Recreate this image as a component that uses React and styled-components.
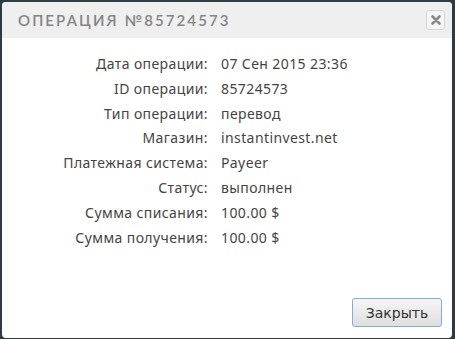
import styled, { createGlobalStyle } from "styled-components";

const GlobalStyle = createGlobalStyle`
	html, body {
		margin: 0;
		padding: 0;
		background: #2d3c43;
	}
	#root {
		height: 339px;
		padding: 2px 3px 1px 2px;
		box-sizing: border-box;
	}
`;

const rows = [
	["Дата операции:", "07 Сен 2015 23:36"],
	["ID операции:", "85724573"],
	["Тип операции:", "перевод"],
	["Магазин:", "instantinvest.net"],
	["Платежная система:", "Payeer"],
	["Статус:", "выполнен"],
	["Сумма списания:", "100.00 $"],
	["Сумма получения:", "100.00 $"],
];

const App = () => {
	return (
		<>
			<GlobalStyle />
			<Dialog>
				<Header>
					<Title>Операция №85724573</Title>
					<CloseButton>
						<svg width="10" height="10" viewBox="0 0 10 10">
							<path
								d="M1.5 1.5 L8.5 8.5 M8.5 1.5 L1.5 8.5"
								stroke="#888"
								strokeWidth="2.6"
								strokeLinecap="round"
							/>
						</svg>
					</CloseButton>
				</Header>
				<Body>
					<Details>
						{rows.map(([label, value]) => (
							<Row key={label}>
								<Label>{label}</Label>
								<Value>{value}</Value>
							</Row>
						))}
					</Details>
				</Body>
				<Footer>
					<Button>Закрыть</Button>
				</Footer>
			</Dialog>
		</>
	);
};

export default App;

const Dialog = styled.div`
	height: 100%;
	background: #fff;
	border-radius: 4px;
	overflow: hidden;
	display: flex;
	flex-direction: column;
`;

const Header = styled.div`
	height: 36px;
	background: #efefef;
	display: flex;
	align-items: center;
	justify-content: space-between;
	padding: 0 7px 0 16px;
	flex-shrink: 0;
`;

const Title = styled.h2`
	margin: 0;
	font-family: "Lato", "Open Sans", sans-serif;
	font-weight: 600;
	font-size: 15px;
	letter-spacing: 2.1px;
	text-transform: uppercase;
	color: #858585;
`;

const CloseButton = styled.button`
	width: 19px;
	height: 20px;
	padding: 0;
	border: 1px solid #d6d6d6;
	border-radius: 3px;
	background: #f6f6f6;
	display: flex;
	align-items: center;
	justify-content: center;
	cursor: pointer;
`;

const Body = styled.div`
	flex: 1;
	padding-top: 14px;
`;

const Details = styled.div`
	display: grid;
	grid-template-columns: 206px auto;
	column-gap: 13px;
`;

const Row = styled.div`
	display: contents;
`;

const Label = styled.div`
	text-align: right;
	font-family: "Noto Sans", sans-serif;
	font-size: 14px;
	letter-spacing: 0.4px;
	line-height: 24.8px;
	color: #444;
`;

const Value = styled.div`
	font-family: "Noto Sans", sans-serif;
	font-size: 14px;
	letter-spacing: 0.4px;
	line-height: 24.8px;
	color: #444;
`;

const Footer = styled.div`
	display: flex;
	justify-content: flex-end;
	padding: 0 10px 11px 0;
`;

const Button = styled.button`
	width: 90px;
	height: 29px;
	border: 1px solid #86a9e0;
	border-radius: 3px;
	background: linear-gradient(#f6f6f6, #dedede);
	font-family: "DejaVu Sans", sans-serif;
	font-size: 14px;
	color: #333;
	cursor: pointer;
`;
